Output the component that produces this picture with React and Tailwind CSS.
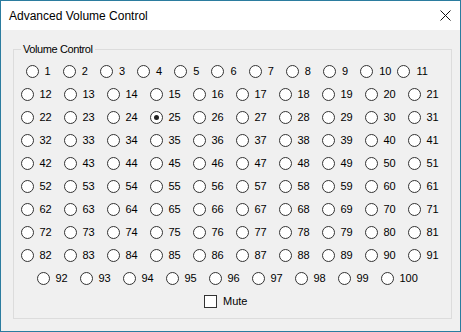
import React from "react";

const range = (a, b) => Array.from({ length: b - a + 1 }, (_, i) => a + i);

const ROWS = [
  { nums: range(1, 11), wide: false, pad: "pl-[11.5px]" },
  ...range(0, 7).map((r) => ({ nums: range(12 + r * 10, 21 + r * 10), wide: true, pad: "pl-[6.5px]" })),
  { nums: range(92, 100), wide: true, pad: "pl-[22.5px]" },
];

function Radio({ n, checked, wide }) {
  return (
    <label className={`flex items-center ${wide ? "w-[43px]" : "w-[37.2px]"}`}>
      <span className="flex size-[13px] shrink-0 items-center justify-center rounded-full border border-[#333] bg-white">
        {checked && <span className="size-[5px] rounded-full bg-[#222]" />}
      </span>
      <span className="ml-[6px] text-[11px] leading-none text-black">{n}</span>
    </label>
  );
}

export default function App() {
  return (
    <div
      className="flex h-[332px] w-[461px] flex-col border border-[#2b7c9f] bg-white"
      style={{ fontFamily: '"Liberation Sans", Arial, sans-serif' }}
    >
      {/* title bar */}
      <div className="flex h-[29px] shrink-0 items-center justify-between bg-white pl-[8px] pr-[9px]">
        <span className="text-[12px] text-black">Advanced Volume Control</span>
        <svg width="11" height="11" viewBox="0 0 11 11">
          <path d="M0.5 0.5 L10.5 10.5 M10.5 0.5 L0.5 10.5" stroke="#111" strokeWidth="1" />
        </svg>
      </div>

      {/* body */}
      <div className="flex-1 bg-[#f0f0f0] pt-[12px]">
        <fieldset className="ml-[12px] mr-[11px] border border-[#dcdcdc] pb-[5px] pt-[4px]">
          <legend className="ml-[7px] px-[2px] text-[11px] leading-[14px] tracking-[-0.4px] text-black">
            Volume Control
          </legend>
          {ROWS.map((row, i) => (
            <div key={i} className={`flex h-[23px] items-center ${row.pad}`}>
              {row.nums.map((n) => (
                <Radio key={n} n={n} wide={row.wide} checked={n === 25} />
              ))}
            </div>
          ))}
          <div className="flex h-[23px] items-center pl-[190px]">
            <span className="size-[13px] border border-[#333] bg-white" />
            <span className="ml-[6px] text-[11px] leading-none text-black">Mute</span>
          </div>
        </fieldset>
      </div>
    </div>
  );
}
